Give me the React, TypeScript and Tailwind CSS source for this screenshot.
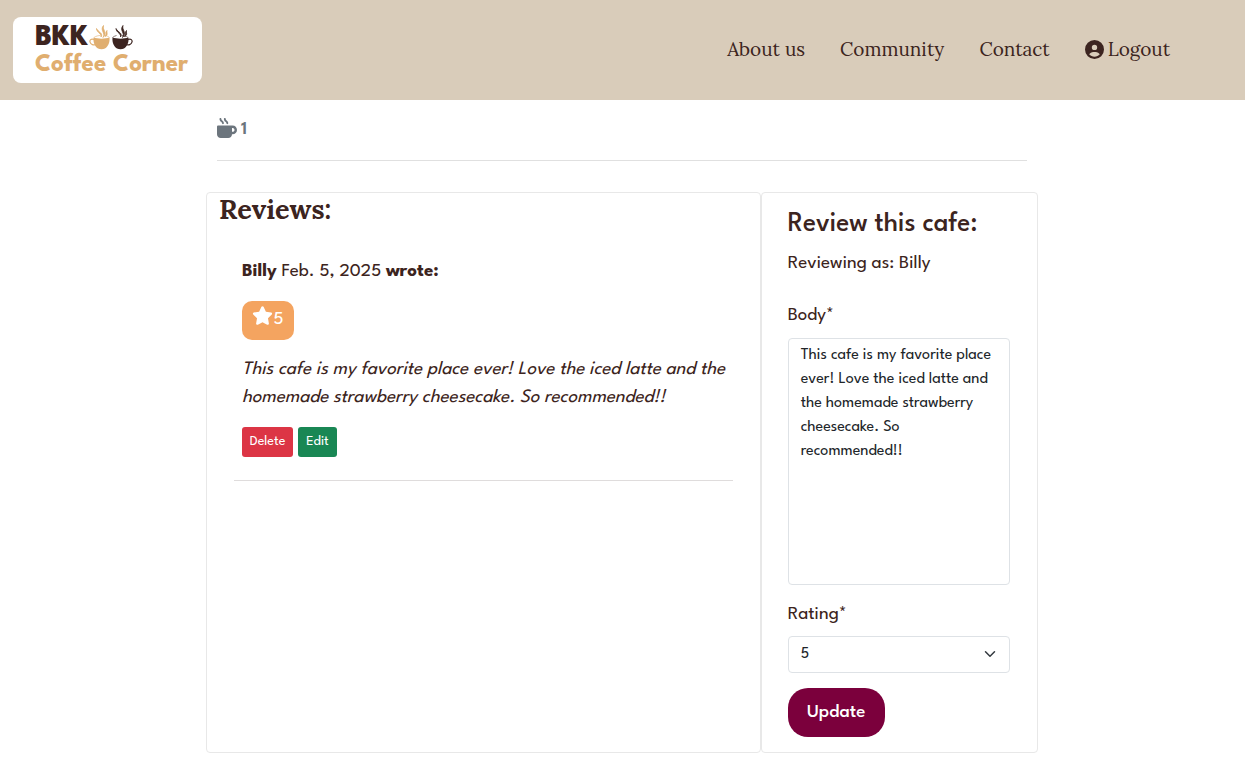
import React from "react";
import { FaCircleUser, FaMugHot, FaStar } from "react-icons/fa6";

const reviewText =
  "This cafe is my favorite place ever! Love the iced latte and the homemade strawberry cheesecake. So recommended!!";

function Cup({ flip, className }: { flip?: boolean; className: string }) {
  return (
    <svg
      viewBox="0 0 42 50"
      className={className}
      fill="none"
      stroke="currentColor"
      aria-hidden="true"
    >
      <g transform={flip ? "translate(42 0) scale(-1 1)" : undefined}>
        <path
          d="M9 25c8 3 24 3 32 0 1 11-3 18-9 22-4 2-10 2-14 0-6-4-10-11-9-22Z"
          fill="currentColor"
          strokeWidth="0"
        />
        <path d="M10 29C4 27 1 30 2 34c1 5 7 7 13 5" strokeWidth="2.4" />
        <path d="M10 25c4-3 9-4 13-4M41 25c-2-2-5-3-8-4" strokeWidth="1.2" />
      </g>
      <g strokeWidth="1.6" fill="currentColor" transform={flip ? "translate(-7 0)" : undefined}>
        <path d="M24 24c2-7-9-9-9-17 4 8 14 9 9 17Z" />
        <path d="M28 25c6-9-7-14 1-24-3 9 9 14-1 24Z" />
        <path d="M32 23c4-4 0-8 4-12-1 5 3 9-4 12Z" />
      </g>
    </svg>
  );
}

function Header() {
  return (
    <header className="flex h-[100px] items-center justify-between bg-[#d9ccba] pr-[75px] pl-[13px]">
      <a
        href="#home"
        className="flex h-[66px] w-[189px] flex-col rounded-lg bg-white pt-2 pl-[22px] font-['League_Spartan','Lato',sans-serif] font-bold whitespace-nowrap"
      >
        <span className="flex h-[27px] items-start text-[30px] leading-[27px] font-extrabold text-[#3c2420]">
          BKK
          <Cup className="ml-px h-[25px] w-[21px] text-[#e0ae6f]" />
          <Cup flip className="ml-[2px] h-[25px] w-[21px] text-[#3c2420]" />
        </span>
        <span className="h-[27px] text-[25px] leading-[27px] text-[#e0ae6f]">Coffee Corner</span>
      </a>
      <nav className="flex gap-[35px] pb-0.5 font-['Lora','Liberation_Serif',serif] text-[19px] leading-[28px]">
        <a href="#about" className="hover:underline">About us</a>
        <a href="#community" className="hover:underline">Community</a>
        <a href="#contact" className="hover:underline">Contact</a>
        <a href="#logout" className="flex items-center gap-1 hover:underline">
          <FaCircleUser className="size-[19px]" />
          Logout
        </a>
      </nav>
    </header>
  );
}

function Reviews() {
  return (
    <section className="w-2/3 rounded border border-[#e8e8e8] px-3">
      <h2 className="font-['Lora','Liberation_Serif',serif] text-[27px] leading-[32px] font-bold">Reviews:</h2>
      <article className="mx-[15px] mt-[33px] border-b border-[#dfdcdc] pb-[23px] pl-2">
        <p>
          <strong className="font-bold">Billy</strong> Feb. 5, 2025{" "}
          <strong className="font-bold">wrote:</strong>
        </p>
        <div className="mt-[15px] flex h-[39px] w-[52px] justify-center rounded-[10px] bg-[#f4a460] pt-1 text-white">
          <FaStar className="size-[21px]" />
          <span className="pt-px">5</span>
        </div>
        <p className="mt-4 italic">{reviewText}</p>
        <div className="mt-[15px] flex gap-[5px] text-[14px] text-white">
          <button type="button" className="h-[30px] w-[51px] rounded-[3px] bg-[#dc3545]">Delete</button>
          <button type="button" className="h-[30px] w-[39px] rounded-[3px] bg-[#198754]">Edit</button>
        </div>
      </article>
    </section>
  );
}

function ReviewForm() {
  return (
    <form
      className="w-1/3 rounded border border-[#e8e8e8] pt-4 pr-[27px] pb-[15px] pl-[26px]"
      onSubmit={(e) => e.preventDefault()}
    >
      <h3 className="text-[27px] leading-[32px] font-medium whitespace-nowrap">Review this cafe:</h3>
      <p className="mt-[9px]">Reviewing as: Billy</p>
      <label htmlFor="body" className="mt-6 block">Body*</label>
      <textarea
        id="body"
        defaultValue={reviewText}
        className="mt-2 block h-[247px] w-full resize-none rounded border border-[#dee2e6] bg-white px-3 py-[5px] text-[16px] leading-[24px] text-[#212529]"
      />
      <label htmlFor="rating" className="mt-4 block">Rating*</label>
      <div className="relative mt-[7px]">
        <select
          id="rating"
          defaultValue="5"
          className="block h-[37px] w-full appearance-none rounded border border-[#dee2e6] bg-white px-3 text-[16px] text-[#212529]"
        >
          <option>1</option>
          <option>2</option>
          <option>3</option>
          <option>4</option>
          <option>5</option>
        </select>
        <svg
          viewBox="0 0 16 16"
          className="pointer-events-none absolute top-3 right-[14px] size-3"
          fill="none"
          stroke="#343a40"
          strokeWidth="2"
          strokeLinecap="round"
          strokeLinejoin="round"
          aria-hidden="true"
        >
          <path d="m2 5 6 6 6-6" />
        </svg>
      </div>
      <button type="submit" className="mt-[15px] h-[49px] w-[97px] rounded-[20px] bg-[#7b003c] font-medium text-white">
        Update
      </button>
    </form>
  );
}

export default function App() {
  return (
    <div className="min-h-screen bg-white font-['League_Spartan','Lato',sans-serif] text-[19px] leading-[28px] text-[#3c2420]">
      <Header />
      <main className="mx-auto max-w-[833px] pr-px">
        <div className="mx-[11px] flex h-[61px] items-center gap-1 border-b border-[#e0e0e0] pb-1 font-semibold text-[#6c757d]">
          <FaMugHot className="size-[20px]" />
          <span className="pt-1">1</span>
        </div>
        <div className="mt-[31px] flex">
          <Reviews />
          <ReviewForm />
        </div>
      </main>
    </div>
  );
}
